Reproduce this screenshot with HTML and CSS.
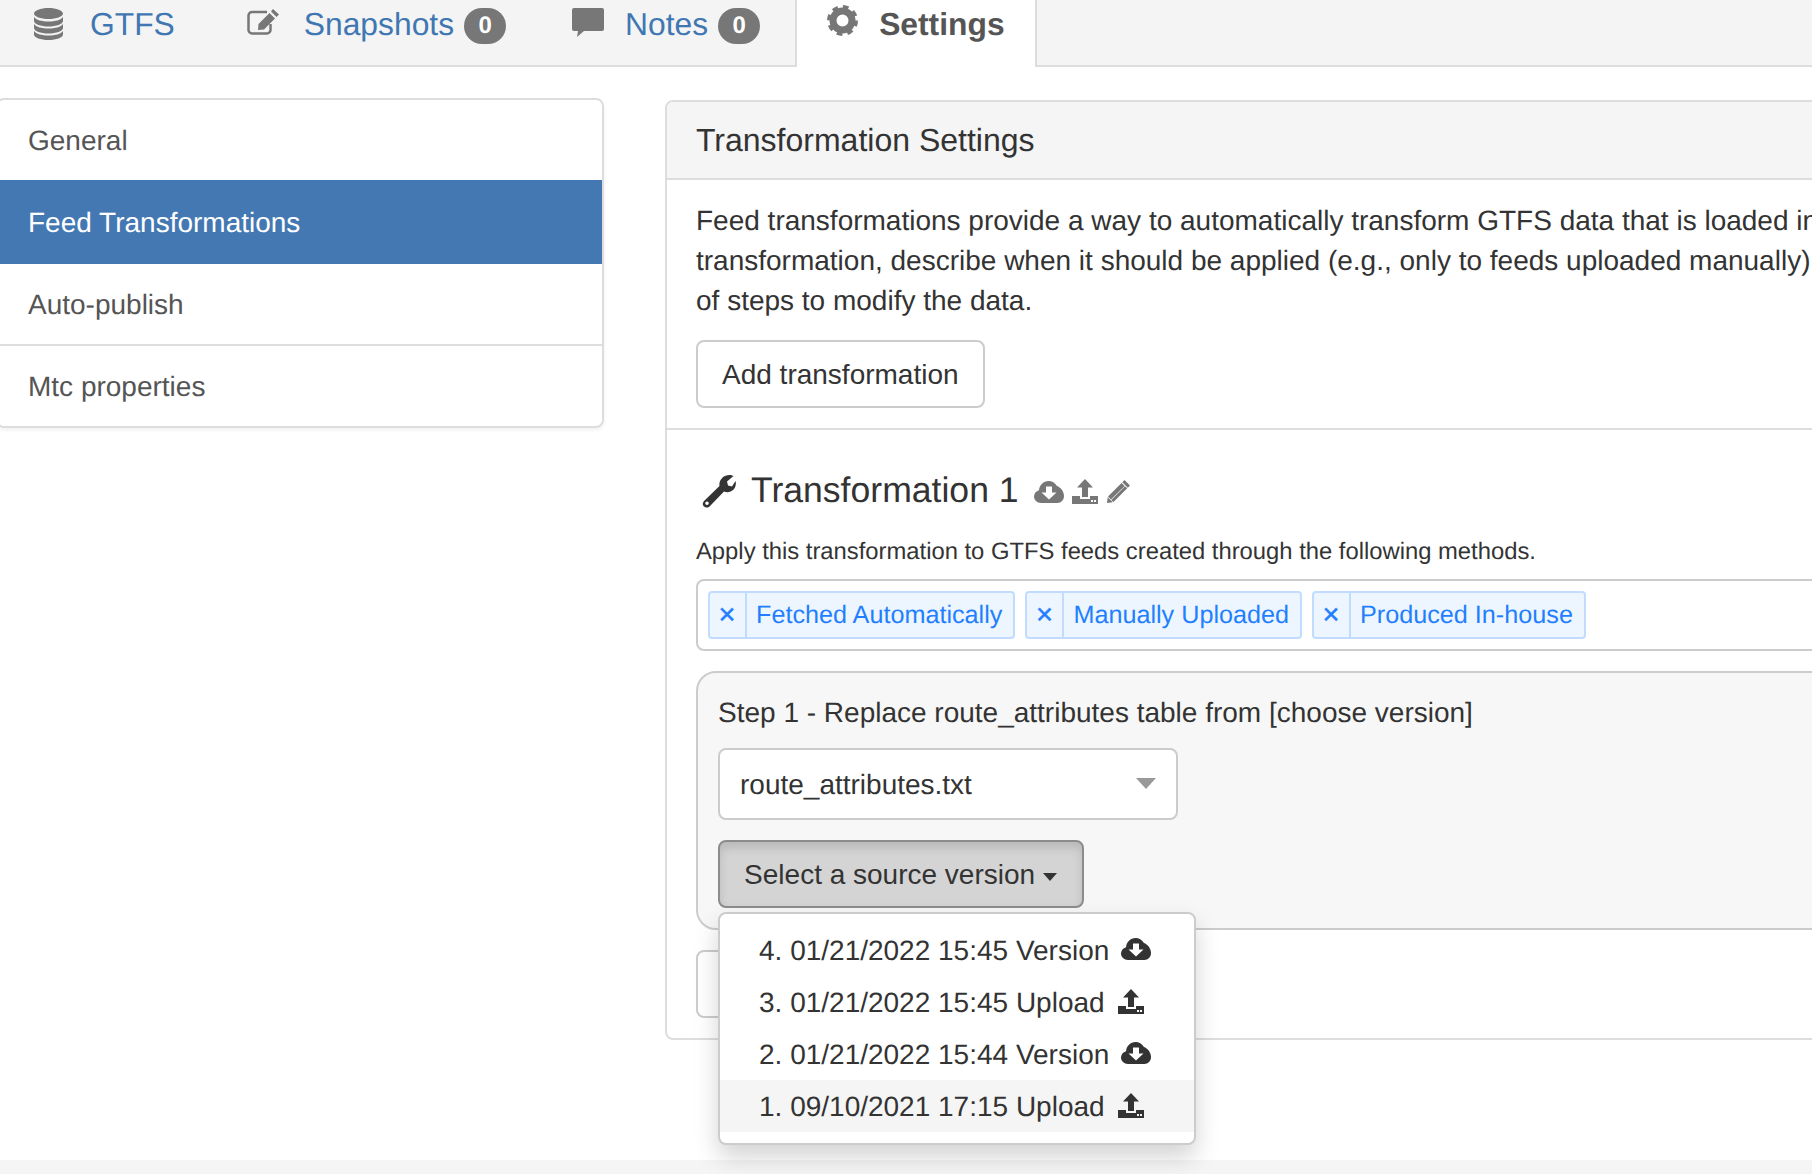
FILE: index.html

```html
<!DOCTYPE html>
<html lang="en">
<head>
    <meta charset="UTF-8">
    <title>Feed Transformations</title>
    <link rel="stylesheet" href="styles.css">
</head>
<body>
    <svg class="icon-defs">
        <symbol id="i-cloud" viewBox="0 0 30 22">
            <path fill-rule="evenodd" d="M7 22C3 22 0 19 0 15.500 0 12.500 2 10 5 9.200 5.500 4 9.500 0 14.500 0 18 0 21 2 22.700 4.800 26.800 6.600 30 10.500 30 15 30 19 27 22 23.500 22ZM12 5.500V11.500H7.500L15 18.500 22.500 11.500H18V5.500Z"/>
        </symbol>
        <symbol id="i-upload" viewBox="0 0 26 25">
            <path fill-rule="evenodd" d="M13 0 21 8.500H16V18H10V8.500H5ZM0 17H8V20H18V17H26V25H0ZM19 21V23H21V21ZM22 21V23H24V21Z"/>
        </symbol>
        <symbol id="i-pencil" viewBox="0 0 23 23">
            <path d="M17.500 0 23 5.500 20.800 7.700 15.300 2.200ZM14.600 2.900 17.600 5.900 3.900 19.600 1 16.600ZM18 6.300 20.200 8.300 6.500 22 4.300 20ZM.7 17.200 5.800 22.300 0 23Z"/>
        </symbol>
    </svg>

    <ul class="tabs">
        <li class="tab tab-first">
            <svg class="tab-icon icon-db" viewBox="0 0 29 32"><path d="M0 5.500C0 2.500 6.500 0 14.500 0S29 2.500 29 5.500 22.500 11 14.500 11 0 8.500 0 5.500ZM0 9C2 12 8 13.500 14.500 13.500S27 12 29 9V13C29 16 22.500 18.500 14.500 18.500S0 16 0 13ZM0 16C2 19 8 20.500 14.500 20.500S27 19 29 16V20C29 23 22.500 25.500 14.500 25.500S0 23 0 20ZM0 23C2 26 8 27.500 14.500 27.500S27 26 29 23V26.500C29 29.500 22.500 32 14.500 32S0 29.500 0 26.500Z"/></svg>
            <a class="tab-link">GTFS</a>
        </li>
        <li class="tab tab-counted">
            <svg class="tab-icon icon-edit" viewBox="0 0 32 26"><path class="edit-box" d="M20 3H5A3.500 3.500 0 0 0 1.500 6.500V21A3.500 3.500 0 0 0 5 24.500H20A3.500 3.500 0 0 0 23.500 21V15"/><path d="M26 0 32 5.500 29.500 8 24 2.500ZM22.500 4 28 9.500 17 20.500 11 21 11.500 15Z"/></svg>
            <a class="tab-link">Snapshots</a>
            <span class="badge">0</span>
        </li>
        <li class="tab tab-counted">
            <svg class="tab-icon icon-note" viewBox="0 0 32 29"><path d="M2 0H30A2 2 0 0 1 32 2V21A2 2 0 0 1 30 23H12L5 29 6 23H2A2 2 0 0 1 0 21V2A2 2 0 0 1 2 0Z"/></svg>
            <a class="tab-link">Notes</a>
            <span class="badge">0</span>
        </li>
        <li class="tab tab-active">
            <svg class="tab-icon icon-gear" viewBox="0 0 31 31"><circle class="gear-ring" cx="15.500" cy="15.500" r="9.500"/><circle class="gear-teeth" cx="15.500" cy="15.500" r="13.500"/></svg>
            <a class="tab-link">Settings</a>
        </li>
    </ul>

    <div class="page">
        <ul class="side-list">
            <li class="side-item">General</li>
            <li class="side-item side-active">Feed Transformations</li>
            <li class="side-item">Auto-publish</li>
            <li class="side-item">Mtc properties</li>
        </ul>

        <div class="panel">
            <h3 class="panel-heading">Transformation Settings</h3>
            <div class="panel-intro">
                <p class="intro-text">Feed transformations provide a way to automatically transform GTFS data that is loaded in<br>transformation, describe when it should be applied (e.g., only to feeds uploaded manually)<br>of steps to modify the data.</p>
                <button type="button" class="btn">Add transformation</button>
            </div>

            <div class="transformation">
                <h4 class="transform-title">
                    <svg class="icon-wrench" viewBox="0 0 34 33"><path fill-rule="evenodd" d="M3 25 17.500 11C16.500 5 21.500 0 27.500 0 29 0 30.500.5 31.500 1L25 6.500 26 10.500 30 11.500 33.500 6C35.500 13 28.500 19.500 22 16.500L8 31C6 33 3.500 33 1.500 31 0 29 1 27 3 25ZM5 26.500A1.800 1.800 0 1 0 5 30.100 1.800 1.800 0 1 0 5 26.500Z"/></svg>
                    <span>Transformation 1</span>
                    <svg class="title-icon icon-cloud"><use href="#i-cloud"/></svg>
                    <svg class="title-icon icon-upload"><use href="#i-upload"/></svg>
                    <svg class="title-icon icon-pencil"><use href="#i-pencil"/></svg>
                </h4>
                <p class="apply-label">Apply this transformation to GTFS feeds created through the following methods.</p>

                <div class="tag-box">
                    <span class="tag"><span class="tag-x">×</span><span class="tag-label">Fetched Automatically</span></span>
                    <span class="tag"><span class="tag-x">×</span><span class="tag-label">Manually Uploaded</span></span>
                    <span class="tag"><span class="tag-x">×</span><span class="tag-label">Produced In-house</span></span>
                </div>

                <div class="step">
                    <div class="step-title">Step 1 - Replace route_attributes table from [choose version]</div>
                    <div class="select-box">
                        <span>route_attributes.txt</span>
                        <span class="select-arrow"></span>
                    </div>
                    <div class="btn-group">
                        <button type="button" class="btn btn-open">Select a source version <span class="caret"></span></button>
                        <ul class="menu">
                            <li class="menu-item">4. 01/21/2022 15:45 Version <svg class="menu-icon icon-cloud"><use href="#i-cloud"/></svg></li>
                            <li class="menu-item">3. 01/21/2022 15:45 Upload <svg class="menu-icon icon-upload"><use href="#i-upload"/></svg></li>
                            <li class="menu-item">2. 01/21/2022 15:44 Version <svg class="menu-icon icon-cloud"><use href="#i-cloud"/></svg></li>
                            <li class="menu-item menu-hover">1. 09/10/2021 17:15 Upload <svg class="menu-icon icon-upload"><use href="#i-upload"/></svg></li>
                        </ul>
                    </div>
                </div>

                <button type="button" class="btn btn-step"></button>
            </div>
        </div>
    </div>

    <div class="footer"></div>
</body>
</html>
```

FILE: styles.css

```css
html, body {
    height: 100%;
}
body {
    margin: 0;
    display: flex;
    flex-direction: column;
    overflow: hidden;
    font-family: "Liberation Sans", Arial, sans-serif;
    font-size: 28px;
    line-height: 40px;
    color: #333;
    background-color: #fff;
    text-rendering: geometricPrecision;
}
ul {
    list-style: none;
    margin: 0;
    padding: 0;
}
.icon-defs {
    display: none;
}

/* tabs */
.tabs {
    display: flex;
    gap: 8px;
    height: 65px;
    padding-left: 4px;
    background-color: #f4f4f4;
    border-bottom: 2px solid #ddd;
    flex-shrink: 0;
}
.tab {
    display: flex;
    align-items: center;
    height: 48px;
    padding: 0 30px;
    font-size: 31.800px;
    fill: #777;
}
.tab-first {
    padding-right: 34px;
}
.tab-counted {
    padding-right: 28px;
}
.tab-link {
    color: #4077b2;
}
.tab-active {
    height: 67px;
    align-items: flex-start;
    padding: 2px 30px 0;
    margin-left: -1px;
    box-sizing: border-box;
    background-color: #fff;
    border-left: 2px solid #ddd;
    border-right: 2px solid #ddd;
}
.tab-active .tab-link {
    color: #555;
    font-weight: bold;
    line-height: 44px;
}
.tab-icon {
    flex-shrink: 0;
}
.icon-db {
    width: 29px;
    height: 32px;
    margin-right: 27px;
    margin-top: -1px;
}
.icon-edit {
    width: 32px;
    height: 26px;
    margin-right: 25px;
    margin-top: -4px;
}
.edit-box {
    fill: none;
    stroke: #777;
    stroke-width: 2.5;
}
.icon-note {
    width: 32px;
    height: 29px;
    margin-right: 21px;
    margin-top: -4px;
}
.icon-gear {
    width: 31px;
    height: 31px;
    margin-right: 21px;
    margin-top: 3px;
}
.gear-ring {
    fill: none;
    stroke: #777;
    stroke-width: 7;
}
.gear-teeth {
    fill: none;
    stroke: #777;
    stroke-width: 4;
    stroke-dasharray: 5.600 5;
}
.badge {
    display: inline-block;
    min-width: 42px;
    height: 36px;
    margin-left: 10px;
    margin-top: 4px;
    border-radius: 20px;
    background-color: #777;
    color: #fff;
    font-size: 24px;
    font-weight: bold;
    line-height: 36px;
    text-align: center;
}

/* page layout */
.page {
    flex: 1;
    display: flex;
    align-items: flex-start;
    min-height: 0;
}
.side-list {
    flex: 0 0 608px;
    box-sizing: border-box;
    margin: 31px 0 0 -4px;
    border: 2px solid #ddd;
    border-radius: 8px;
    box-shadow: 0 2px 4px rgba(0,0,0,0.06);
    overflow: hidden;
}
.side-item {
    padding: 21px 30px 19px;
    color: #555;
    border-bottom: 2px solid #ddd;
}
.side-item:nth-child(1),
.side-item:last-child {
    border-bottom: none;
}
.side-active {
    padding: 23px 30px 21px;
    color: #fff;
    border-bottom: none;
    background-color: #4478b2;
}

/* panel */
.panel {
    flex: 0 0 1300px;
    box-sizing: border-box;
    margin: 33px 0 0 61px;
    border: 2px solid #ddd;
    border-radius: 8px;
}
.panel-heading {
    margin: 0;
    padding: 20px 29px;
    font-size: 32px;
    font-weight: normal;
    line-height: 36px;
    background-color: #f5f5f5;
    border-bottom: 2px solid #ddd;
    border-radius: 6px 6px 0 0;
}
.panel-intro {
    padding: 21px 29px 20px;
    border-bottom: 2px solid #ddd;
}
.intro-text {
    margin: 0 0 19px;
    white-space: nowrap;
}
.btn {
    display: block;
    padding: 13px 24px 11px;
    font: inherit;
    color: #333;
    background-color: #fff;
    border: 2px solid #ccc;
    border-radius: 8px;
}
.transformation {
    padding: 40px 29px 20px;
}
.transform-title {
    display: flex;
    align-items: center;
    margin: 0;
    font-size: 35.600px;
    font-weight: normal;
    line-height: 40px;
    fill: #777;
}
.icon-wrench {
    width: 34px;
    height: 33px;
    margin: 2px 15px 0 6px;
    fill: #333;
}
.title-icon {
    margin-top: 3px;
}
.icon-cloud {
    width: 30px;
    height: 22px;
}
.icon-upload {
    width: 26px;
    height: 25px;
}
.icon-pencil {
    width: 23px;
    height: 23px;
}
.transform-title .icon-cloud {
    margin-left: 15px;
}
.transform-title .icon-upload {
    margin-left: 8px;
}
.transform-title .icon-pencil {
    margin-left: 9px;
}
.apply-label {
    margin: 25px 0 10px;
    font-size: 23.800px;
    line-height: 34px;
}

/* multi select */
.tag-box {
    display: flex;
    gap: 10px;
    padding: 10px;
    border: 2px solid #ccc;
    border-radius: 8px;
}
.tag {
    display: flex;
    height: 48px;
    box-sizing: border-box;
    font-size: 25.200px;
    line-height: 44px;
    color: #1f7fff;
    background-color: #edf5ff;
    border: 2px solid #c2dcff;
    border-radius: 4px;
}
.tag-x {
    width: 34px;
    padding-right: 1px;
    font-size: 29px;
    text-align: center;
    border-right: 2px solid #c2dcff;
    -webkit-text-stroke: 0.5px #1f7fff;
}
.tag-label {
    padding: 0 11px 0 9px;
}

/* step */
.step {
    margin: 20px 0;
    padding: 20px;
    background-color: #f7f7f7;
    border: 2px solid #ccc;
    border-radius: 20px;
}
.step-title {
    margin-bottom: 15px;
}
.select-box {
    display: flex;
    justify-content: space-between;
    align-items: center;
    box-sizing: border-box;
    width: 460px;
    height: 72px;
    padding: 2px 20px 0;
    background-color: #fff;
    border: 2px solid #ccc;
    border-radius: 8px;
}
.select-arrow {
    width: 0;
    height: 0;
    border-top: 11px solid #999;
    border-left: 10px solid transparent;
    border-right: 10px solid transparent;
    margin-top: -4px;
}
.btn-group {
    position: relative;
    margin-top: 20px;
    width: 366px;
}
.btn-open {
    width: 366px;
    padding-left: 23px;
    white-space: nowrap;
    background-color: #d4d4d4;
    border-color: #8c8c8c;
    box-shadow: inset 0 6px 10px rgba(0,0,0,0.125);
}
.caret {
    display: inline-block;
    width: 0;
    height: 0;
    vertical-align: middle;
    border-top: 8px solid #333;
    border-left: 7px solid transparent;
    border-right: 7px solid transparent;
}
.menu {
    position: absolute;
    top: 100%;
    left: 0;
    z-index: 10;
    box-sizing: border-box;
    width: 478px;
    margin-top: 4px;
    padding: 10px 0 11px;
    background-color: #fff;
    border: 2px solid #ccc;
    border-radius: 8px;
    box-shadow: 0 12px 24px rgba(0,0,0,0.175);
}
.menu-item {
    display: flex;
    align-items: center;
    height: 52px;
    box-sizing: border-box;
    padding: 2px 39px 0;
    white-space: pre;
}
.menu-hover {
    background-color: #f5f5f5;
}
.menu-icon {
    fill: #333;
    margin-left: 4px;
    margin-top: -4px;
}
.menu-icon.icon-upload {
    margin-left: 6px;
}
.btn-step {
    width: 300px;
    height: 68px;
}

.footer {
    flex: 0 0 14px;
    background-color: #f5f5f5;
}
```
